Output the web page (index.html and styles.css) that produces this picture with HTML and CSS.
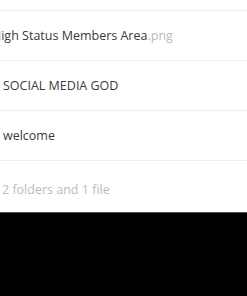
FILE: index.html
```html
<!DOCTYPE html>
<html lang="en">
<head>
    <meta charset="UTF-8">
    <meta name="viewport" content="width=device-width, initial-scale=1.0">
    <title>Files</title>
    <link rel="stylesheet" href="styles.css">
</head>
<body>
    <div class="filelist">
        <div class="row first"><span class="name">High Status Members Area</span><span class="ext">.png</span></div>
        <div class="row"><span class="name">SOCIAL MEDIA GOD</span></div>
        <div class="row"><span class="name">welcome</span></div>
        <div class="summary">2 folders and 1 file</div>
    </div>
</body>
</html>
```

FILE: styles.css
```css
body {
    margin: 0;
    background-color: #000;
    font-family: "Open Sans", sans-serif;
    font-size: 12.5px;
    color: #3a3a3a;
}
.filelist {
    background-color: #fff;
    padding-top: 10px;
    border-bottom: 1px solid #555;
}
.row {
    height: 49px;
    line-height: 50px;
    border-top: 1px solid #eee;
    padding-left: 3px;
    white-space: nowrap;
    overflow: hidden;
}
.row.first {
    text-indent: -11px;
}
.ext {
    color: #bbb;
}
.summary {
    height: 51px;
    line-height: 58px;
    border-top: 1px solid #eee;
    padding-left: 2px;
    color: #bbb;
}
```
